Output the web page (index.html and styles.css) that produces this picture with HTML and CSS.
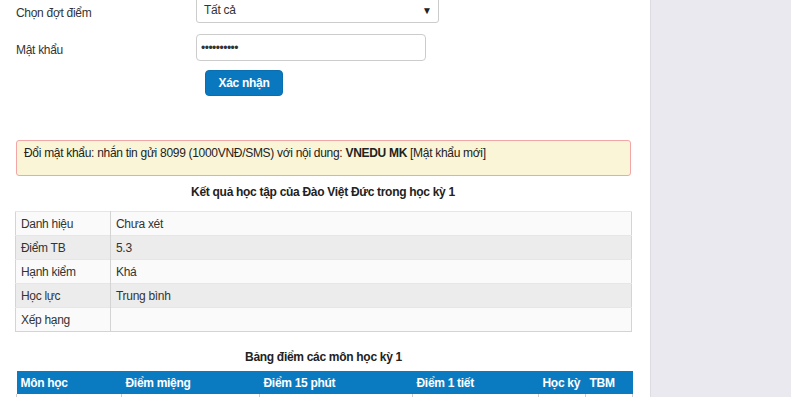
FILE: index.html
```html
<!DOCTYPE html>
<html lang="vi">
<head>
<meta charset="utf-8">
<link rel="stylesheet" href="styles.css">
</head>
<body>
<div class="page">
  <div class="main">
    <div class="form">
      <div class="row row-select">
        <label class="label">Chọn đợt điểm</label>
        <div class="select"><span>Tất cả</span><span class="caret">▼</span></div>
      </div>
      <div class="row row-pass">
        <label class="label">Mật khẩu</label>
        <input class="input" type="password" value="1234567890">
      </div>
      <div class="row row-btn">
        <span></span>
        <button class="btn">Xác nhận</button>
      </div>
    </div>

    <div class="alert">Đổi mật khẩu: nhắn tin gửi 8099 (1000VNĐ/SMS) với nội dung: <b>VNEDU MK</b> [Mật khẩu mới]</div>

    <h3 class="title t1">Kết quả học tập của Đào Việt Đức trong học kỳ 1</h3>
    <table class="summary">
      <tr><td class="k">Danh hiệu</td><td>Chưa xét</td></tr>
      <tr><td class="k">Điểm TB</td><td>5.3</td></tr>
      <tr><td class="k">Hạnh kiểm</td><td>Khá</td></tr>
      <tr><td class="k">Học lực</td><td>Trung bình</td></tr>
      <tr><td class="k">Xếp hạng</td><td></td></tr>
    </table>

    <h3 class="title t2">Bảng điểm các môn học kỳ 1</h3>
    <table class="grades">
      <thead>
        <tr>
          <th class="c1">Môn học</th>
          <th class="c2">Điểm miệng</th>
          <th class="c3">Điểm 15 phút</th>
          <th class="c4">Điểm 1 tiết</th>
          <th class="c5">Học kỳ</th>
          <th class="c6">TBM</th>
        </tr>
      </thead>
      <tbody>
        <tr><td></td><td></td><td></td><td></td><td></td><td></td></tr>
      </tbody>
    </table>
  </div>
  <div class="side"></div>
</div>
</body>
</html>
```

FILE: styles.css
```css
html, body {
  margin: 0;
  padding: 0;
  overflow: hidden;
}
body {
  font-family: "Liberation Sans", Arial, sans-serif;
  font-size: 12px;
  letter-spacing: -0.3px;
  color: #333;
}
.page {
  display: flex;
  height: 397px;
  overflow: hidden;
}
.main {
  width: 651px;
  flex: none;
  border-right: 1px solid #dcdce3;
  background: #fff;
  padding: 0 19px 0 16px;
  box-sizing: border-box;
}
.side {
  flex: 1;
  background: #e9e9ef;
}
.form {
  margin-top: -3px;
}
.row {
  display: grid;
  grid-template-columns: 180px auto;
  align-items: center;
}
.label {
  font-size: 12px;
  color: #333;
  margin-top: 5px;
}
.select {
  width: 243px;
  height: 26px;
  box-sizing: border-box;
  border: 1px solid #ccc;
  border-radius: 3px;
  display: flex;
  align-items: center;
  justify-content: space-between;
  padding: 0 6px 0 7px;
  font-size: 12px;
  color: #333;
}
.caret {
  font-size: 10px;
  color: #222;
  letter-spacing: 0;
}
.row-pass {
  margin-top: 11px;
}
.input {
  width: 230px;
  height: 27px;
  box-sizing: border-box;
  border: 1px solid #ccc;
  border-radius: 4px;
  padding: 0 4px;
  font-family: "Liberation Sans", Arial, sans-serif;
  font-size: 12px;
  color: #333;
  letter-spacing: -0.5px;
  outline: none;
}
.row-btn {
  margin-top: 9px;
}
.btn {
  margin-left: 9px;
  width: 78px;
  height: 26px;
  background: #0a78bf;
  color: #fff;
  border: 1px solid #0a6fb0;
  border-radius: 4px;
  font-family: "Liberation Sans", Arial, sans-serif;
  font-size: 12px;
  font-weight: bold;
  letter-spacing: -0.3px;
  padding: 0;
}
.alert {
  margin-top: 44px;
  height: 36px;
  box-sizing: border-box;
  background: #fbf5d7;
  border: 1px solid #f3a6a6;
  border-radius: 3px;
  padding: 5px 7px 0;
  line-height: 14px;
  color: #222;
}
.title {
  margin: 0;
  font-size: 12px;
  font-weight: bold;
  text-align: center;
  color: #222;
  line-height: 14px;
}
.t1 {
  margin-top: 9px;
  margin-bottom: 12px;
  margin-left: -1px;
}
.summary {
  width: 617px;
  margin-left: -1px;
  border-collapse: collapse;
  border: 1px solid #d4d4d4;
  table-layout: fixed;
}
.summary tr {
  height: 24px;
}
.summary td {
  padding: 0 5px;
  border-top: 1px solid #e6e6e6;
  color: #333;
}
.summary tr:nth-child(odd) td {
  background: #fafafa;
}
.summary tr:nth-child(even) td {
  background: #ececec;
}
.summary td.k {
  width: 84px;
  border-right: 1px solid #d4d4d4;
}
.t2 {
  margin-top: 18px;
  margin-bottom: 7px;
}
.grades {
  width: 616px;
  border-collapse: collapse;
  table-layout: fixed;
}
.grades th {
  box-sizing: border-box;
  background: #0a7bc1;
  color: #fff;
  font-weight: bold;
  text-align: left;
  height: 23px;
  padding: 0 4px;
  white-space: nowrap;
}
.grades td {
  height: 20px;
  border-left: 1px solid #ccc;
  border-right: 1px solid #ccc;
}
.c1 { width: 105px; }
.c2 { width: 138px; }
.c3 { width: 153px; }
.c4 { width: 126px; }
.c5 { width: 47px; }
.c6 { width: 47px; }
```
